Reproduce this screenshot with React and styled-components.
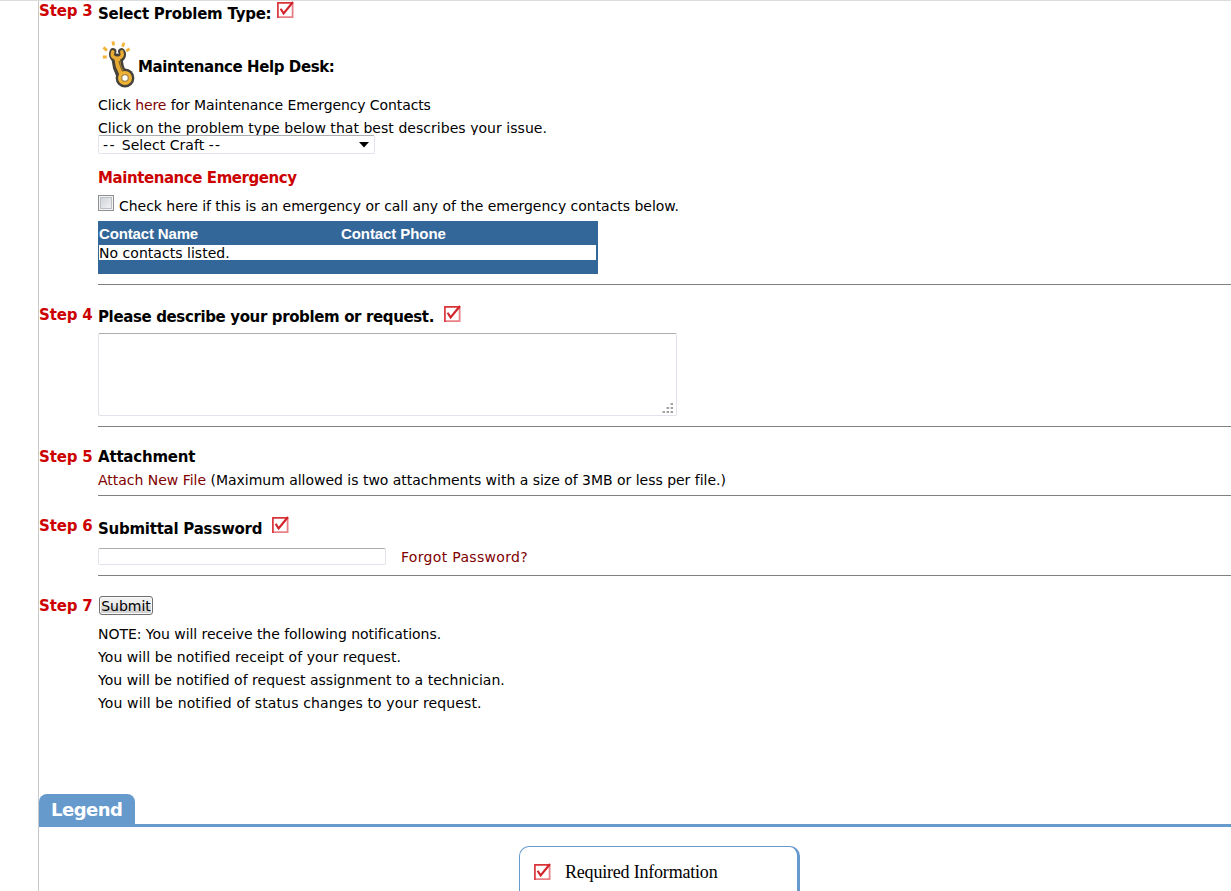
import styled, { createGlobalStyle } from "styled-components";

const GlobalStyle = createGlobalStyle`
  * {
    box-sizing: border-box;
  }
  body {
    margin: 0;
    background: #fff;
    color: #000;
    font-family: "DejaVu Sans", Verdana, sans-serif;
    font-size: 14px;
    font-variant-ligatures: none;
    overflow: hidden;
  }
`;

const Page = styled.div`
  height: 891px;
  overflow: hidden;
  border-top: 1px solid #dcdcdc;
  padding-left: 38px;
`;

const Main = styled.div`
  height: 890px;
  border-left: 1px solid #c8c8c8;
  display: flex;
  flex-direction: column;
`;

const Step = styled.section`
  display: flex;
  flex: none;
  height: ${(props) => props.$height}px;
`;

const StepLabel = styled.div`
  width: 59px;
  flex: none;
  padding-top: ${(props) => props.$top}px;
  color: #c00;
  font-size: 15px;
  font-weight: bold;
  line-height: 20px;
  letter-spacing: -0.15px;
  white-space: nowrap;
`;

const StepBody = styled.div`
  flex: 1;
  display: flex;
  flex-direction: column;
  padding-top: ${(props) => props.$top || 0}px;
  border-bottom: ${(props) => (props.$last ? "none" : "1px solid #808080")};
`;

const Heading = styled.div`
  display: flex;
  align-items: flex-start;
  height: 20px;
  font-size: 15px;
  font-weight: bold;
  line-height: 20px;
`;

const EmergencyHeading = styled(Heading)`
  margin-top: 14px;
  color: #c00;
`;

const Text = styled.span`
  white-space: pre;
  letter-spacing: ${(props) => props.$ls || 0}px;
`;

const Line = styled.div`
  height: ${(props) => props.$height || 23}px;
  line-height: 23px;
  overflow: hidden;
  white-space: pre;
  letter-spacing: ${(props) => props.$ls || 0}px;
`;

const AttachLine = styled(Line)`
  margin-top: 2px;
`;

const Link = styled.a`
  color: #800000;
  cursor: pointer;
`;

const RequiredSvg = styled.svg`
  flex: none;
  margin-left: ${(props) => props.$left || 0}px;
  margin-top: ${(props) => props.$top || 0}px;
`;

const HelpDesk = styled.div`
  display: flex;
  align-items: flex-start;
  height: 56px;
  margin-top: 14px;
`;

const HelpDeskTitle = styled(Heading)`
  margin-top: 19px;
`;

const Craft = styled.div`
  display: flex;
  align-items: center;
  justify-content: space-between;
  width: 277px;
  height: 19px;
  padding: 0 5px 0 4px;
  border: 1px solid #e3e3ec;
  border-top-color: #abadb3;
  border-radius: 2px;
  background: #fff;
`;

const CheckLine = styled.label`
  display: flex;
  height: 26px;
  margin-top: 7px;
  line-height: 23px;
`;

const Checkbox = styled.span`
  width: 16px;
  height: 16px;
  margin-right: 5px;
  border: 1px solid #8e8f8f;
  background: linear-gradient(135deg, #cbcfd5, #f6f6f6);
  box-shadow: inset 0 0 0 1px #f4f4f4, inset 0 0 0 2px #bcc0c6;
`;

const Contacts = styled.div`
  width: 500px;
  height: 53px;
  padding: 0 2px 0 1px;
  background: #336699;
`;

const ContactsHead = styled.div`
  display: grid;
  grid-template-columns: 242px 1fr;
  height: 24px;
  color: #fff;
  font: bold 15px/25px "Liberation Sans", Arial, sans-serif;
`;

const ContactsRow = styled.div`
  height: 15px;
  line-height: 16px;
  background: #fff;
`;

const Request = styled.div`
  display: flex;
  align-items: flex-end;
  justify-content: flex-end;
  width: 579px;
  height: 83px;
  margin-top: 6px;
  padding: 1px 2px;
  border: 1px solid #e2e3ea;
  border-top-color: #abadb3;
  border-radius: 2px;
`;

const PasswordRow = styled.div`
  display: flex;
  align-items: flex-start;
  gap: 15px;
  margin-top: 9px;
  line-height: 19px;
`;

const Password = styled.input`
  width: 288px;
  height: 17px;
  padding: 0 3px;
  border: 1px solid #e2e3ea;
  border-top-color: #abadb3;
  border-radius: 2px;
  outline: none;
`;

const Submit = styled.button`
  width: 54px;
  height: 19px;
  margin: 0 0 8px 1px;
  padding: 1px 0 0;
  border: 1px solid #707070;
  border-radius: 3px;
  background: linear-gradient(#f2f2f2 0%, #ebebeb 50%, #dddddd 51%, #cfcfcf 100%);
  box-shadow: inset 0 0 0 1px #fafafa;
  color: #000;
  font: 14px/17px "DejaVu Sans", Verdana, sans-serif;
  white-space: nowrap;
`;

const LegendBar = styled.div`
  flex: none;
  height: 33px;
  border-bottom: 3px solid #6699cc;
`;

const LegendTab = styled.div`
  width: 96px;
  height: 33px;
  padding-left: 12px;
  border-radius: 8px 8px 0 0;
  background: #6699cc;
  color: #fff;
  font-size: 18px;
  font-weight: bold;
  line-height: 31px;
`;

const LegendBox = styled.div`
  display: flex;
  flex: none;
  align-items: flex-start;
  gap: 13px;
  width: 281px;
  height: 70px;
  margin: 19px 0 0 480px;
  padding-left: 14px;
  border: 1px solid #6699cc;
  border-right-width: 3px;
  border-radius: 10px;
  font: 18px/50px "Liberation Serif", "Times New Roman", serif;
`;

const RequiredIcon = ({ left, top }) => (
  <RequiredSvg $left={left} $top={top} width="18" height="18" viewBox="0 0 18 18">
    <path d="M0 1h16v16H0z" fill="#fff" />
    <path d="M15.6 2v14.2H1" fill="none" stroke="#e88085" strokeWidth="1.8" />
    <path d="M.9 17V1.8h15" fill="none" stroke="#d8343a" strokeWidth="1.7" />
    <path d="M3.6 7.8l3 4.6L16 1" fill="none" stroke="#d2232a" strokeWidth="2.1" />
  </RequiredSvg>
);

const WrenchIcon = () => (
  <svg width="40" height="52" viewBox="0 0 40 52" fill="none">
    <path
      d="M14.8 3.4l1 4M26 4.8l-1.4 4M31.6 10.8l-3.4 2.2M5.4 9.4l3.6 3.2M4.8 19h4"
      stroke="#f3b43c"
      strokeWidth="2.8"
    />
    <path
      d="M15 13.5c-2 5 1 7.5 5 7.5s6-4 3.5-7.5"
      stroke="#45423c"
      strokeWidth="6.8"
      strokeLinecap="round"
    />
    <path d="M19 21l1.4 8 3.6 9" stroke="#45423c" strokeWidth="11" strokeLinecap="round" />
    <circle cx="27" cy="40" r="9.4" fill="#45423c" />
    <path
      d="M14.8 13.8c-1.8 4.6 1 6.4 4.8 6.4s5.6-2.8 4.2-6.4"
      stroke="#e9ab32"
      strokeWidth="3.4"
      strokeLinecap="round"
    />
    <path d="M19 20l1.4 8 4 9" stroke="#e9ab32" strokeWidth="5.4" />
    <path d="M21 23l1.4 5 3 7" stroke="#74602f" strokeWidth="1.2" />
    <circle cx="27" cy="40" r="7" fill="#efb233" />
    <circle cx="27" cy="40" r="3.3" fill="#fff" stroke="#a98b4a" strokeWidth="1.3" />
  </svg>
);

const GripIcon = () => (
  <svg width="12" height="12" viewBox="0 0 12 12" fill="#a0a0a0">
    <path d="M9 1h2v2H9zM5 5h2v2H5zM9 5h2v2H9zM1 9h2v2H1zM5 9h2v2H5zM9 9h2v2H9z" />
    <path
      d="M8 1h1v2H8zM4 5h1v2H4zM8 5h1v2H8zM0 9h1v2H0zM4 9h1v2H4zM8 9h1v2H8z"
      fill="#d4d4d4"
    />
  </svg>
);

const notes = [
  { text: "NOTE: You will receive the following notifications.", ls: -0.04 },
  { text: "You will be notified receipt of your request.", ls: 0.06 },
  { text: "You will be notified of request assignment to a technician.", ls: 0.02 },
  { text: "You will be notified of status changes to your request.", ls: 0.13 },
];

const App = () => {
  return (
    <>
      <GlobalStyle />
      <Page>
        <Main>
          <Step $height={284}>
            <StepLabel $top={0}>Step 3</StepLabel>
            <StepBody $top={3}>
              <Heading>
                <Text $ls={-0.25}>Select Problem Type:</Text>
                <RequiredIcon left={6} top={-3} />
              </Heading>
              <HelpDesk>
                <WrenchIcon />
                <HelpDeskTitle>
                  <Text $ls={-0.41}>Maintenance Help Desk:</Text>
                </HelpDeskTitle>
              </HelpDesk>
              <Line $ls={-0.1}>
                Click <Link>here</Link> for Maintenance Emergency Contacts
              </Line>
              <Line $height={18} $ls={0.04}>
                Click on the problem type below that best describes your issue.
              </Line>
              <Craft>
                <span>
                  <Text $ls={1.4}>-- </Text>
                  <Text $ls={0.04}>Select Craft </Text>
                  <Text $ls={1.4}>--</Text>
                </span>
                <svg width="10" height="6" viewBox="0 0 10 6">
                  <path d="M0 0h10L5 5.5z" />
                </svg>
              </Craft>
              <EmergencyHeading>
                <Text $ls={-0.43}>Maintenance Emergency</Text>
              </EmergencyHeading>
              <CheckLine>
                <Checkbox />
                <Text $ls={-0.03}>
                  Check here if this is an emergency or call any of the emergency contacts below.
                </Text>
              </CheckLine>
              <Contacts>
                <ContactsHead>
                  <Text $ls={-0.15}>Contact Name</Text>
                  <Text $ls={-0.08}>Contact Phone</Text>
                </ContactsHead>
                <ContactsRow>
                  <Text $ls={0.03}>No contacts listed.</Text>
                </ContactsRow>
              </Contacts>
            </StepBody>
          </Step>
          <Step $height={142}>
            <StepLabel $top={20}>Step 4</StepLabel>
            <StepBody $top={22}>
              <Heading>
                <Text $ls={-0.37}>Please describe your problem or request.</Text>
                <RequiredIcon left={10} top={-2} />
              </Heading>
              <Request>
                <GripIcon />
              </Request>
            </StepBody>
          </Step>
          <Step $height={69}>
            <StepLabel $top={20}>Step 5</StepLabel>
            <StepBody $top={20}>
              <Heading>
                <Text $ls={-0.2}>Attachment</Text>
              </Heading>
              <AttachLine $ls={-0.02}>
                <Link>Attach New File</Link> (Maximum allowed is two attachments with a size of 3MB or less per file.)
              </AttachLine>
            </StepBody>
          </Step>
          <Step $height={80}>
            <StepLabel $top={20}>Step 6</StepLabel>
            <StepBody $top={23}>
              <Heading>
                <Text $ls={-0.25}>Submittal Password</Text>
                <RequiredIcon left={10} top={-3} />
              </Heading>
              <PasswordRow>
                <Password type="password" />
                <Link>
                  <Text $ls={0.32}>Forgot Password?</Text>
                </Link>
              </PasswordRow>
            </StepBody>
          </Step>
          <Step $height={218}>
            <StepLabel $top={20}>Step 7</StepLabel>
            <StepBody $top={20} $last>
              <Submit>Submit</Submit>
              {notes.map((note) => (
                <Line key={note.text} $ls={note.ls}>
                  {note.text}
                </Line>
              ))}
            </StepBody>
          </Step>
          <LegendBar>
            <LegendTab>
              <Text $ls={-0.5}>Legend</Text>
            </LegendTab>
          </LegendBar>
          <LegendBox>
            <RequiredIcon top={16} />
            <Text $ls={-0.2}>Required Information</Text>
          </LegendBox>
        </Main>
      </Page>
    </>
  );
};

export default App;
